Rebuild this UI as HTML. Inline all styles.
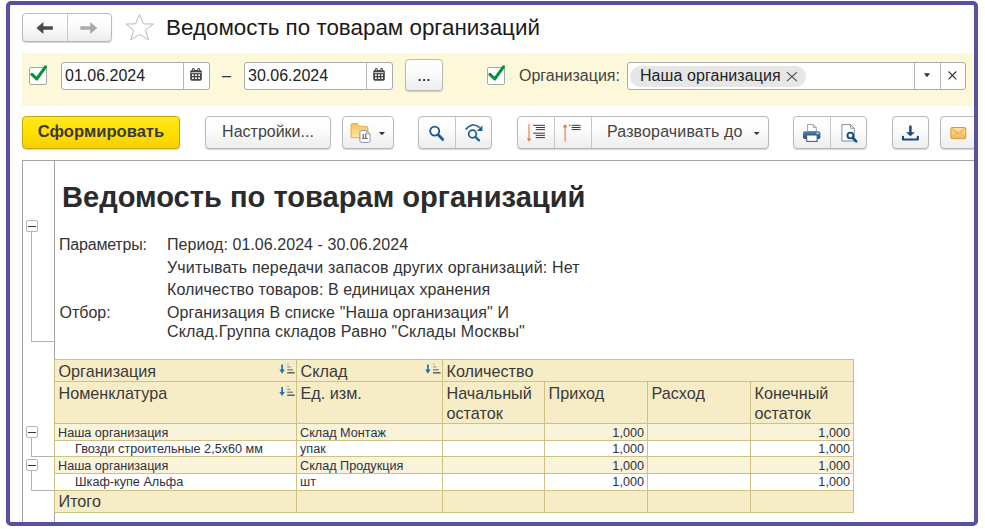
<!DOCTYPE html>
<html lang="ru">
<head>
<meta charset="utf-8">
<title>Ведомость по товарам организаций</title>
<style>
html,body{margin:0;padding:0;background:#fff;}
body{width:985px;height:529px;position:relative;overflow:hidden;font-family:"Liberation Sans",Arial,sans-serif;color:#333;}
.abs{position:absolute;}
#frame{left:6px;top:1px;width:964px;height:517px;border:4px solid #5751a0;border-radius:5px;z-index:50;pointer-events:none;}
#shadow{left:978px;top:6px;width:2px;height:518px;background:linear-gradient(to right,#dcdcec,#fff);}
#clip{left:10px;top:5px;width:964px;height:517px;overflow:hidden;}
#in{left:-10px;top:-5px;width:985px;height:529px;}
.btn{position:absolute;box-sizing:border-box;border:1px solid #b9b9b9;border-radius:4px;background:linear-gradient(#ffffff 0%,#fbfbfb 45%,#ececec 100%);box-shadow:0 1px 1px rgba(0,0,0,.18);font-size:16px;color:#444;text-align:center;white-space:nowrap;}
.btn .sep{position:absolute;top:0;bottom:0;width:1px;background:#c6c6c6;}
.inp{position:absolute;box-sizing:border-box;border:1px solid #a9a9a9;border-radius:3px;background:#fff;font-size:16px;color:#222;white-space:nowrap;}
.inp .sep{position:absolute;top:0;bottom:0;width:1px;background:#b5b5b5;}
.t{position:absolute;white-space:nowrap;line-height:1;}
.cb{position:absolute;box-sizing:border-box;width:18px;height:18px;border:1px solid #a8a8a8;border-radius:2px;background:#fff;}
.cb svg{position:absolute;left:-1px;top:-4px;}
/* report */
.p{position:absolute;white-space:nowrap;font-size:16px;line-height:1;color:#333;}
table.r{position:absolute;left:54px;top:359px;border-collapse:collapse;table-layout:fixed;width:799px;}
table.r td{border:1px solid #cfc183;padding:0;box-sizing:border-box;vertical-align:top;white-space:nowrap;color:#3a3a3a;}
table.r td .c{height:1px;overflow:visible;}
table.r tr.h td{background:#f6ecc6;font-size:16.2px;line-height:19.5px;padding:2px 0 0 3.5px;}
table.r tr.g td{background:#f9f3da;font-size:12.65px;line-height:15px;padding:1.6px 0 0 3px;color:#30303a;}
table.r tr.d td{background:#fff;font-size:12.65px;line-height:15px;padding:1px 0 0 3px;color:#30303a;}
table.r td.n{text-align:right;padding-right:3px !important;}
.ln{position:absolute;background:#b2b2b2;}
.mb{position:absolute;box-sizing:border-box;width:12px;height:12px;border:1px solid #b4b4b4;background:#fff;border-radius:2px;}
.mb i{position:absolute;left:1px;top:4.5px;width:8px;height:1.3px;background:#3a3a3a;}
</style>
</head>
<body>
<div id="clip" class="abs"><div id="in" class="abs">

<!-- header -->
<div class="btn" style="left:22px;top:13px;width:90px;height:29px;">
  <div class="sep" style="left:44px;"></div>
  <svg class="abs" style="left:0;top:0" width="90" height="29" viewBox="0 0 90 29">
    <path d="M13.4 14 L20.4 8 V12.2 H29.8 V15.8 H20.4 V20 Z" fill="#4a4a4a"/>
    <path d="M74.2 14 L67.2 8 V12.2 H57.3 V15.8 H67.2 V20 Z" fill="#a9a9a9"/>
  </svg>
</div>
<svg class="abs" style="left:120px;top:8px" width="40" height="40" viewBox="120 8 40 40">
  <path d="M139.5 14.6 L143.4 23.9 L153.4 24 L145.4 30.3 L148.7 39.9 L139.5 34.3 L130.6 39.9 L133.7 30.3 L125.9 24 L135.6 23.9 Z" fill="#fff" stroke="#b3bac2" stroke-width="1" stroke-linejoin="miter"/>
</svg>
<div class="t" style="left:166px;top:15px;font-size:22.4px;line-height:25px;color:#1a1a1a;transform-origin:0 20px;transform:scaleY(1.022);">Ведомость по товарам организаций</div>

<!-- yellow band -->
<div class="abs" style="left:22px;top:53px;width:960px;height:53px;background:#fdf8da;"></div>
<div class="cb" style="left:29px;top:67px;"><svg width="20" height="20" viewBox="0 0 20 20"><path d="M2.9 10.4 L7.8 14.9 L16.5 2.8" fill="none" stroke="#079238" stroke-width="3.1" stroke-linejoin="round" stroke-linecap="round"/></svg></div>
<div class="inp" style="left:61px;top:62px;width:149px;height:28px;">
  <div class="t" style="left:3px;top:5px;">01.06.2024</div>
  <div class="sep" style="left:121px;"></div>
  <svg class="abs" style="left:128px;top:5px" width="12" height="13" viewBox="0 0 12 13"><rect x="0.2" y="1.9" width="11.6" height="10.9" rx="1.7" fill="#444"/><rect x="2" y="0" width="2.6" height="3.6" rx="1.2" fill="#444"/><rect x="7.4" y="0" width="2.6" height="3.6" rx="1.2" fill="#444"/><rect x="2.8" y="0.9" width="1" height="1.6" rx="0.5" fill="#eee"/><rect x="8.2" y="0.9" width="1" height="1.6" rx="0.5" fill="#eee"/><rect x="1.2" y="4.3" width="9.6" height="0.8" fill="#fff"/><g fill="#fff"><rect x="2" y="6.3" width="1.8" height="1.7"/><rect x="5.1" y="6.3" width="1.8" height="1.7"/><rect x="8.2" y="6.3" width="1.8" height="1.7"/><rect x="2" y="9.3" width="1.8" height="1.7"/><rect x="5.1" y="9.3" width="1.8" height="1.7"/><rect x="8.2" y="9.3" width="1.8" height="1.7"/></g></svg>
</div>
<div class="t" style="left:222px;top:68px;font-size:16px;color:#333;">–</div>
<div class="inp" style="left:244px;top:62px;width:149px;height:28px;">
  <div class="t" style="left:3px;top:5px;">30.06.2024</div>
  <div class="sep" style="left:121px;"></div>
  <svg class="abs" style="left:128px;top:5px" width="12" height="13" viewBox="0 0 12 13"><rect x="0.2" y="1.9" width="11.6" height="10.9" rx="1.7" fill="#444"/><rect x="2" y="0" width="2.6" height="3.6" rx="1.2" fill="#444"/><rect x="7.4" y="0" width="2.6" height="3.6" rx="1.2" fill="#444"/><rect x="2.8" y="0.9" width="1" height="1.6" rx="0.5" fill="#eee"/><rect x="8.2" y="0.9" width="1" height="1.6" rx="0.5" fill="#eee"/><rect x="1.2" y="4.3" width="9.6" height="0.8" fill="#fff"/><g fill="#fff"><rect x="2" y="6.3" width="1.8" height="1.7"/><rect x="5.1" y="6.3" width="1.8" height="1.7"/><rect x="8.2" y="6.3" width="1.8" height="1.7"/><rect x="2" y="9.3" width="1.8" height="1.7"/><rect x="5.1" y="9.3" width="1.8" height="1.7"/><rect x="8.2" y="9.3" width="1.8" height="1.7"/></g></svg>
</div>
<div class="btn" style="left:405px;top:59px;width:38px;height:32px;"><div class="t" style="left:0;right:0;top:9.5px;color:#2e2e2e;font-weight:bold;font-size:13px;letter-spacing:0.8px;text-indent:0.8px;">...</div></div>
<div class="cb" style="left:487px;top:67px;"><svg width="20" height="20" viewBox="0 0 20 20"><path d="M2.9 10.4 L7.8 14.9 L16.5 2.8" fill="none" stroke="#079238" stroke-width="3.1" stroke-linejoin="round" stroke-linecap="round"/></svg></div>
<div class="t" style="left:519px;top:68px;font-size:16px;color:#444;">Организация:</div>
<div class="inp" style="left:627px;top:62px;width:339px;height:28px;">
  <div class="abs" style="left:2px;top:3px;width:176px;height:21px;border-radius:11px;background:#e6e6e6;"></div>
  <div class="t" style="left:12px;top:5px;letter-spacing:0.07px;">Наша организация</div>
  <svg class="abs" style="left:158px;top:8px" width="12" height="11" viewBox="0 0 12 11"><path d="M0.9 1.1 L10.9 10.1 M10.9 1.1 L0.9 10.1" stroke="#4a4a4a" stroke-width="1.05" fill="none"/></svg>
  <div class="sep" style="left:286px;"></div>
  <div class="sep" style="left:312px;"></div>
  <svg class="abs" style="left:295px;top:10px" width="9" height="5" viewBox="0 0 9 5"><path d="M0.9 0.3 H7.1 L4 4.3 Z" fill="#333"/></svg>
  <svg class="abs" style="left:320px;top:8px" width="9" height="9" viewBox="0 0 9 9"><path d="M0.5 0.5 L8.3 8.3 M8.3 0.5 L0.5 8.3" stroke="#333" stroke-width="1.15" fill="none"/></svg>
</div>

<!-- toolbar -->
<div class="btn" style="left:22px;top:116px;width:158px;height:33px;border-color:#c9a800;background:linear-gradient(#ffe81f 0%,#ffe100 50%,#f7cf00 100%);font-weight:bold;color:#3a3a3a;"><div class="t" style="left:0;right:0;top:7px;font-size:16.6px;">Сформировать</div></div>
<div class="btn" style="left:205px;top:116px;width:126px;height:33px;"><div class="t" style="left:0;right:0;top:7px;">Настройки...</div></div>
<div class="btn" style="left:342px;top:116px;width:52px;height:33px;"></div>
<div class="btn" style="left:418px;top:116px;width:74px;height:33px;"><div class="sep" style="left:36px;"></div></div>
<div class="btn" style="left:517px;top:116px;width:252px;height:33px;">
  <div class="sep" style="left:36px;"></div>
  <div class="sep" style="left:73px;"></div>
  <div class="t" style="left:89px;top:7px;letter-spacing:0.14px;">Разворачивать до</div>
</div>
<div class="btn" style="left:793px;top:116px;width:74px;height:33px;"><div class="sep" style="left:36px;"></div></div>
<div class="btn" style="left:892px;top:116px;width:37px;height:33px;"></div>
<div class="btn" style="left:940px;top:116px;width:50px;height:33px;"></div>
<svg class="abs" style="left:0;top:110px" width="985" height="45" viewBox="0 110 985 45">
  <defs>
    <linearGradient id="gf" x1="0" y1="0" x2="0" y2="1"><stop offset="0" stop-color="#f5c255"/><stop offset="1" stop-color="#fde7a6"/></linearGradient>
    <linearGradient id="gm" x1="0" y1="0" x2="0" y2="1"><stop offset="0" stop-color="#fce0a0"/><stop offset="1" stop-color="#f0b95a"/></linearGradient>
    <linearGradient id="gp" x1="0" y1="0" x2="0" y2="1"><stop offset="0" stop-color="#5b82ab"/><stop offset="1" stop-color="#234f7d"/></linearGradient>
  </defs>
  <!-- folder with report -->
  <path d="M351 125 Q351 123.6 352.5 123.6 H357.3 L359.6 126.4 H366.4 Q367.9 126.4 367.9 127.9 V137.7 H351 Z" fill="url(#gf)" stroke="#e0a53c" stroke-width="0.9"/>
  <path d="M359.9 132 Q359.9 130.6 361.3 130.6 H366.8 L370 133.8 V141 Q370 142.4 368.6 142.4 H361.3 Q359.9 142.4 359.9 141 Z" fill="#fff" stroke="#7d90a6" stroke-width="0.9"/>
  <path d="M366.8 130.6 V133.8 H370" fill="none" stroke="#7d90a6" stroke-width="0.8"/>
  <path d="M363.3 138 V134" stroke="#e2443a" stroke-width="1.3"/><path d="M365.7 138 V133.4" stroke="#3aa655" stroke-width="1.3"/>
  <path d="M361.8 138.5 H368" stroke="#555" stroke-width="0.8"/>
  <path d="M379 132 H385 L382 135.2 Z" fill="#333"/>
  <!-- find -->
  <circle cx="434.7" cy="131.1" r="4.5" fill="none" stroke="#1a5b96" stroke-width="1.9"/>
  <path d="M438.2 134.8 L442.8 139.5" stroke="#1a5b96" stroke-width="2.7" stroke-linecap="round"/>
  <!-- find next -->
  <circle cx="472.5" cy="134" r="3.8" fill="none" stroke="#1a5b96" stroke-width="1.7"/>
  <path d="M475.4 137 L479 140.4" stroke="#1a5b96" stroke-width="2.3" stroke-linecap="round"/>
  <path d="M465.6 129.6 Q472.5 121.5 479.6 127.6" fill="none" stroke="#1a5b96" stroke-width="1.6"/>
  <path d="M482.4 125.6 V131 H476.9 Z" fill="#1a5b96"/>
  <!-- expand all -->
  <path d="M529 124.2 V140" stroke="#e9743a" stroke-width="1.1"/><path d="M526.8 138.4 H531.2 L529 141.8 Z" fill="#e9743a"/>
  <g stroke="#3a3a3a" stroke-width="1"><path d="M533.2 125.3 H545"/><path d="M535.8 127.5 H545"/><path d="M535.8 129.6 H545"/><path d="M533.2 133.2 H545"/><path d="M535.8 135.4 H545"/><path d="M535.8 137.6 H545"/></g>
  <!-- collapse all -->
  <path d="M565.1 126 V141.8" stroke="#e9743a" stroke-width="1.1"/><path d="M562.9 127.6 H567.3 L565.1 124 Z" fill="#e9743a"/>
  <g stroke="#3a3a3a" stroke-width="1"><path d="M569 125.3 H570.4 M571.6 125.3 H580.6"/><path d="M571.6 127.5 H580.6"/><path d="M571.6 129.6 H580.6"/></g>
  <path d="M753.8 132 H759.6 L756.7 135 Z" fill="#333"/>
  <!-- print -->
  <path d="M807.6 131.5 V124.6 H813.4 L816.3 127.5 V131.5 Z" fill="#fff" stroke="#8c9aab" stroke-width="0.9"/>
  <path d="M813.4 124.6 V127.5 H816.3" fill="none" stroke="#8c9aab" stroke-width="0.8"/>
  <rect x="803" y="131.2" width="17.4" height="7.8" rx="1.8" fill="url(#gp)"/>
  <rect x="806.7" y="135" width="10.4" height="6.4" fill="#fff" stroke="#2c5885" stroke-width="1"/>
  <rect x="816.6" y="132.8" width="2" height="1.2" fill="#dfe8f2"/>
  <!-- preview -->
  <path d="M841.9 124.6 H850.6 L854.3 128.3 V141 H841.9 Z" fill="#fff" stroke="#6f8399" stroke-width="0.9"/>
  <path d="M850.6 124.6 V128.3 H854.3" fill="none" stroke="#6f8399" stroke-width="0.8"/>
  <circle cx="850.4" cy="135.5" r="2.9" fill="#fff" stroke="#174a7c" stroke-width="1.9"/>
  <path d="M852.9 138 L856.2 141.3" stroke="#174a7c" stroke-width="2.5" stroke-linecap="round"/>
  <!-- save -->
  <path d="M910.4 125.6 V133" stroke="#174a7c" stroke-width="2.5"/>
  <path d="M906 132.2 H914.8 L910.4 136.2 Z" fill="#174a7c"/>
  <path d="M903 136.8 V139.5 H917.8 V136.8" fill="none" stroke="#174a7c" stroke-width="2.2" stroke-linejoin="round" stroke-linecap="round"/>
  <!-- mail -->
  <rect x="950.9" y="127.5" width="14.9" height="11.2" rx="1.2" fill="url(#gm)" stroke="#d99a30" stroke-width="1"/>
  <path d="M951.3 128 L958.3 133.8 L965.4 128" fill="none" stroke="#d99a30" stroke-width="0.9"/>
  <path d="M951.3 138.2 L956.4 132.8 M965.4 138.2 L960.2 132.8" fill="none" stroke="#e3ad52" stroke-width="0.8"/>
</svg>

<!-- report area -->
<div class="ln" style="left:22px;top:160px;width:960px;height:1px;background:#a3a3a3;"></div>
<div class="ln" style="left:22px;top:160px;width:1px;height:370px;background:#a3a3a3;"></div>
<div class="ln" style="left:54px;top:161px;width:1px;height:370px;background:#a3a3a3;"></div>

<div class="t" style="left:62px;top:180.5px;font-size:29.1px;line-height:32px;font-weight:bold;color:#2b2b2b;">Ведомость по товарам организаций</div>
<div class="p" style="left:59px;top:237px;letter-spacing:-0.2px;">Параметры:</div>
<div class="p" style="left:167px;top:237px;letter-spacing:0.055px;">Период: 01.06.2024 - 30.06.2024</div>
<div class="p" style="left:167px;top:260px;letter-spacing:0.17px;">Учитывать передачи запасов других организаций: Нет</div>
<div class="p" style="left:167px;top:282px;letter-spacing:0.11px;">Количество товаров: В единицах хранения</div>
<div class="p" style="left:59.5px;top:304.5px;">Отбор:</div>
<div class="p" style="left:167px;top:304.5px;letter-spacing:0.12px;">Организация В списке "Наша организация" И</div>
<div class="p" style="left:167px;top:324px;letter-spacing:0.16px;">Склад.Группа складов Равно "Склады Москвы"</div>

<!-- group marks -->
<div class="ln" style="left:31px;top:231px;width:1px;height:110px;"></div>
<div class="ln" style="left:31px;top:341px;width:23px;height:1px;"></div>
<div class="mb" style="left:26px;top:220px;"><i></i></div>

<div class="ln" style="left:31px;top:438px;width:1px;height:19px;"></div>
<div class="ln" style="left:31px;top:456px;width:23px;height:1px;"></div>
<div class="mb" style="left:26px;top:426px;"><i></i></div>
<div class="ln" style="left:31px;top:471px;width:1px;height:19px;"></div>
<div class="ln" style="left:31px;top:490px;width:23px;height:1px;"></div>
<div class="mb" style="left:26px;top:459px;"><i></i></div>

<table class="r">
<colgroup><col style="width:242px"><col style="width:146px"><col style="width:102px"><col style="width:103px"><col style="width:103px"><col style="width:103px"></colgroup>
<tr class="h" style="height:22px"><td><div class="c">Организация</div></td><td><div class="c">Склад</div></td><td colspan="4"><div class="c">Количество</div></td></tr>
<tr class="h" style="height:42px"><td><div class="c">Номенклатура</div></td><td><div class="c">Ед. изм.</div></td><td><div class="c">Начальный<br>остаток</div></td><td><div class="c">Приход</div></td><td><div class="c">Расход</div></td><td><div class="c">Конечный<br>остаток</div></td></tr>
<tr class="g" style="height:17px"><td><div class="c">Наша организация</div></td><td><div class="c">Склад Монтаж</div></td><td></td><td class="n"><div class="c">1,000</div></td><td></td><td class="n"><div class="c">1,000</div></td></tr>
<tr class="d" style="height:16px"><td style="padding-left:20px"><div class="c">Гвозди строительные 2,5х60 мм</div></td><td><div class="c">упак</div></td><td></td><td class="n"><div class="c">1,000</div></td><td></td><td class="n"><div class="c">1,000</div></td></tr>
<tr class="g" style="height:17px"><td><div class="c">Наша организация</div></td><td><div class="c">Склад Продукция</div></td><td></td><td class="n"><div class="c">1,000</div></td><td></td><td class="n"><div class="c">1,000</div></td></tr>
<tr class="d" style="height:17px"><td style="padding-left:20px"><div class="c">Шкаф-купе Альфа</div></td><td><div class="c">шт</div></td><td></td><td class="n"><div class="c">1,000</div></td><td></td><td class="n"><div class="c">1,000</div></td></tr>
<tr class="h" style="height:22px"><td style="padding-top:1.3px"><div class="c">Итого</div></td><td></td><td></td><td></td><td></td><td></td></tr>
</table>
<!-- sort icons -->
<svg class="abs" style="left:270px;top:355px" width="180" height="50" viewBox="270 355 180 50"><g transform="translate(0 0)"><path d="M282.1 364.5 V371" stroke="#1e6fb8" stroke-width="1.7"/><path d="M279.4 369.6 H284.8 L282.1 373.7 Z" fill="#1e6fb8"/><path d="M287.2 364.2 H288.9" stroke="#9a9a9a" stroke-width="0.9"/><path d="M287.2 366.9 H290.6" stroke="#858585" stroke-width="1"/><path d="M287.2 369.8 H292.9" stroke="#6a6a6a" stroke-width="1.1"/><path d="M287.2 372.8 H294.7" stroke="#555" stroke-width="1.4"/></g><g transform="translate(0 22.4)"><path d="M282.1 364.5 V371" stroke="#1e6fb8" stroke-width="1.7"/><path d="M279.4 369.6 H284.8 L282.1 373.7 Z" fill="#1e6fb8"/><path d="M287.2 364.2 H288.9" stroke="#9a9a9a" stroke-width="0.9"/><path d="M287.2 366.9 H290.6" stroke="#858585" stroke-width="1"/><path d="M287.2 369.8 H292.9" stroke="#6a6a6a" stroke-width="1.1"/><path d="M287.2 372.8 H294.7" stroke="#555" stroke-width="1.4"/></g><g transform="translate(145.8 0)"><path d="M282.1 364.5 V371" stroke="#1e6fb8" stroke-width="1.7"/><path d="M279.4 369.6 H284.8 L282.1 373.7 Z" fill="#1e6fb8"/><path d="M287.2 364.2 H288.9" stroke="#9a9a9a" stroke-width="0.9"/><path d="M287.2 366.9 H290.6" stroke="#858585" stroke-width="1"/><path d="M287.2 369.8 H292.9" stroke="#6a6a6a" stroke-width="1.1"/><path d="M287.2 372.8 H294.7" stroke="#555" stroke-width="1.4"/></g></svg>

</div></div>
<div id="frame" class="abs"></div>
</body>
</html>
